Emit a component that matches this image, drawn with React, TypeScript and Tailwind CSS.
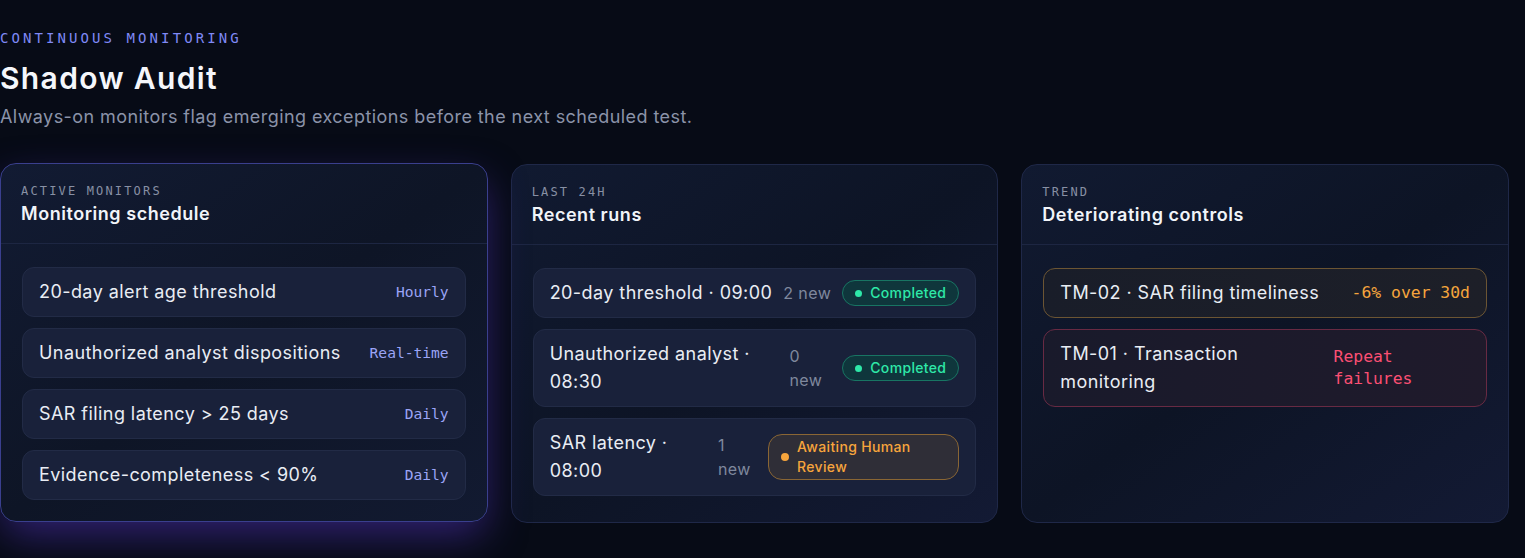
const schedule = [
  { name: "20-day alert age threshold", freq: "Hourly" },
  { name: "Unauthorized analyst dispositions", freq: "Real-time" },
  { name: "SAR filing latency > 25 days", freq: "Daily" },
  { name: "Evidence-completeness < 90%", freq: "Daily" },
];

const runs = [
  { name: "20-day threshold · 09:00", count: "2 new", status: "Completed" },
  { name: "Unauthorized analyst · 08:30", count: "0 new", status: "Completed" },
  { name: "SAR latency · 08:00", count: "1 new", status: "Awaiting Human Review" },
];

const trends = [
  { name: "TM-02 · SAR filing timeliness", value: "-6% over 30d", tone: "amber" },
  { name: "TM-01 · Transaction monitoring", value: "Repeat failures", tone: "rose" },
];

function Card({
  label,
  title,
  glow,
  children,
}: {
  label: string;
  title: string;
  glow?: boolean;
  children: React.ReactNode;
}) {
  return (
    <div
      className={
        glow
          ? "-translate-y-px rounded-2xl border border-[#3a3f8e] bg-gradient-to-br from-[#121b33] via-[#0e1526] to-[#121a31] shadow-[0_16px_40px_-4px_rgba(92,56,210,0.5)]"
          : "rounded-2xl border border-[#1f2848] bg-gradient-to-br from-[#111a31] via-[#0d1425] to-[#131a34]"
      }
    >
      <div className="border-b border-[#1d2642] px-5 pt-[19px] pb-[15px]">
        <div className="font-['DejaVu_Sans_Mono',monospace] text-[12px] leading-4 tracking-[0.18em] text-[#8890a4]">
          {label}
        </div>
        <div className="mt-px text-lg font-semibold tracking-[0.03em] text-[#f1f4f9]">{title}</div>
      </div>
      <div className="flex flex-col gap-[11px] px-[21px] pt-[23px] pb-[21px]">{children}</div>
    </div>
  );
}

function Badge({ status }: { status: string }) {
  const done = status === "Completed";
  return (
    <span
      className={
        done
          ? "flex items-center gap-2 rounded-full border border-[#187563] bg-[#0f363c] py-[2px] pl-3 pr-3 text-sm font-medium tracking-[0.024em] text-[#2ee8a8]"
          : "flex items-center gap-2 rounded-[14px] border border-[#8a6634] bg-[#2f2e37] py-[2px] pl-3 pr-3 text-sm font-medium tracking-[0.024em] text-[#f7a53c]"
      }
    >
      <span className={done ? "h-[7px] w-[7px] shrink-0 rounded-full bg-[#2ee8a8]" : "h-2 w-2 shrink-0 rounded-full bg-[#f7a53c]"} />
      <span>{status}</span>
    </span>
  );
}

export default function App() {
  return (
    <div className="min-h-screen bg-[#070b16] font-['Inter',sans-serif] text-[#e8ecf3]">
      <div className="pt-[30px]">
        <div className="font-['DejaVu_Sans_Mono',monospace] text-[14px] leading-4 tracking-[0.22em] text-[#7f89f5]">
          CONTINUOUS MONITORING
        </div>
        <h1 className="mt-[14px] text-[30px] leading-9 font-semibold tracking-[0.045em] text-[#f5f7fb]">Shadow Audit</h1>
        <p className="mt-[7px] text-lg tracking-[0.024em] text-[#8b93a9]">
          Always-on monitors flag emerging exceptions before the next scheduled test.
        </p>

        <div className="mt-[33px] grid w-[1509px] grid-cols-3 items-stretch gap-[23px]">
          <Card label="ACTIVE MONITORS" title="Monitoring schedule" glow>
            {schedule.map((s) => (
              <div
                key={s.name}
                className="flex items-center justify-between gap-4 rounded-xl border border-[#222b46] bg-[#19213a] px-4 py-[10px]"
              >
                <span className="text-lg tracking-[0.024em] text-[#e9edf4]">{s.name}</span>
                <span className="font-['DejaVu_Sans_Mono',monospace] text-[14.6px] text-[#9ba4f6]">{s.freq}</span>
              </div>
            ))}
          </Card>

          <Card label="LAST 24H" title="Recent runs">
            {runs.map((r) => (
              <div
                key={r.name}
                className="flex items-center justify-between gap-[10px] rounded-xl border border-[#222b46] bg-[#19213a] px-4 py-[10px]"
              >
                <span className="text-lg tracking-[0.024em] text-[#e9edf4]">{r.name}</span>
                <span className="text-base tracking-[0.024em] text-[#7f889d]">{r.count}</span>
                <Badge status={r.status} />
              </div>
            ))}
          </Card>

          <Card label="TREND" title="Deteriorating controls">
            {trends.map((t) => (
              <div
                key={t.name}
                className={
                  t.tone === "amber"
                    ? "flex items-center justify-between gap-4 rounded-xl border border-[#6c5533] bg-gradient-to-r from-[#191d29] to-[#1d1f28] px-4 py-[10px]"
                    : "flex items-center justify-between gap-4 rounded-xl border border-[#682a43] bg-gradient-to-r from-[#191a2b] to-[#1f1a2b] px-4 py-[10px]"
                }
              >
                <span className="text-lg tracking-[0.024em] text-[#e9edf4]">{t.name}</span>
                <span
                  className={
                    t.tone === "amber"
                      ? "font-['DejaVu_Sans_Mono',monospace] text-[16.4px] leading-[22px] text-[#f5a53d]"
                      : "font-['DejaVu_Sans_Mono',monospace] text-[16.4px] leading-[22px] text-[#fb4f73]"
                  }
                >
                  {t.value}
                </span>
              </div>
            ))}
          </Card>
        </div>
      </div>
    </div>
  );
}
